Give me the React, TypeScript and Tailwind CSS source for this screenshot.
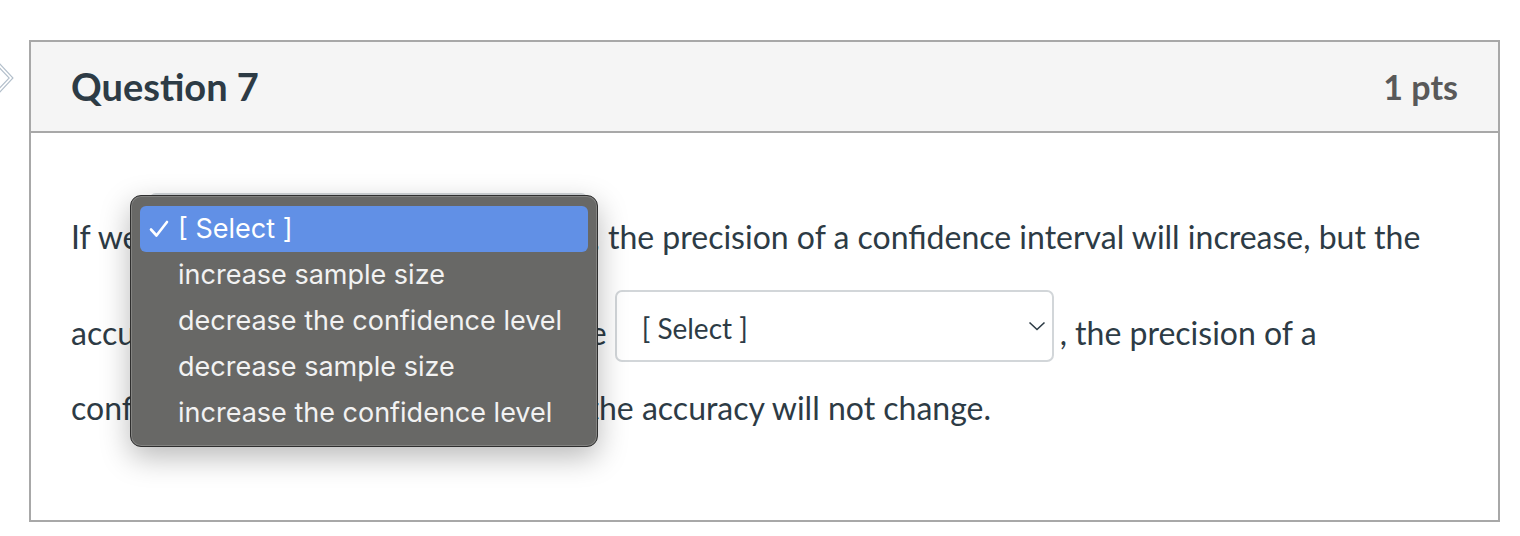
import React from 'react';

const options = [
  '[ Select ]',
  'increase sample size',
  'decrease the confidence level',
  'decrease sample size',
  'increase the confidence level',
];

const Chevron = () => (
  <svg width="18" height="10" viewBox="0 0 18 10" fill="none">
    <path d="M1.5 1.5 L9 8.5 L16.5 1.5" stroke="#2d3b45" strokeWidth="1.6" />
  </svg>
);

const Check = () => (
  <svg width="20" height="18" viewBox="0 0 20 18" fill="none">
    <path d="M2 9.5 L7.5 15.5 L18 2" stroke="#ffffff" strokeWidth="2.6" strokeLinecap="round" strokeLinejoin="round" />
  </svg>
);

const SelectBox: React.FC<{ className?: string }> = ({ className = '' }) => (
  <div
    className={`flex items-center justify-between w-[439px] h-[72px] border-2 border-[#d2d6d9] rounded-[7px] bg-white pl-[25px] pr-[6px] pt-[4px] shrink-0 ${className}`}
  >
    <span className="text-[28px] text-[#2d3b45]">[ Select ]</span>
    <span className="-mt-[4px]">
      <Chevron />
    </span>
  </div>
);

const NativeMenu = () => (
  <div className="absolute left-[99px] top-[153px] w-[468px] rounded-[11px] border border-[#2f2f2f] bg-[#686866] shadow-[0_10px_30px_rgba(0,0,0,0.28),inset_0_0_0_1px_rgba(255,255,255,0.18)] px-[9px] py-[10px] font-['Inter',sans-serif]">
    {options.map((o, i) => (
      <div
        key={o}
        className={`flex items-center h-[46px] rounded-[6px] text-[27px] ${
          i === 0 ? 'bg-[#6190e6] text-white' : 'text-[#f2f2f2]'
        }`}
      >
        <span className="w-[38px] pl-[9px] flex items-center">{i === 0 ? <Check /> : null}</span>
        <span>{o}</span>
      </div>
    ))}
  </div>
);

export default function App() {
  return (
    <div className="w-[1520px] h-[536px] bg-white font-['Lato',sans-serif] text-[#2d3b45] pt-[40px] flex overflow-hidden">
      <svg width="29" height="40" viewBox="0 0 29 40" className="mt-[22px] shrink-0">
        <path d="M-3 1 L11 16 L-3 31" stroke="#b3bfcb" strokeWidth="4" fill="none" strokeLinejoin="miter" />
        <path d="M-3 1 L11 16 L-3 31" stroke="#ffffff" strokeWidth="1.6" fill="none" strokeLinejoin="miter" />
      </svg>
      <div className="relative w-[1471px] h-[482px] border-2 border-[#a8a8a8] flex flex-col">
        <div className="h-[91px] bg-[#f5f5f5] border-b-2 border-[#a8a8a8] flex items-center justify-between px-[40px]">
          <h2 className="text-[38px] font-bold text-[#2d3b45]">Question 7</h2>
          <span className="text-[34px] font-bold text-[#595959]">1 pts</span>
        </div>
        <div className="flex flex-col gap-[25px] pl-[40px] pt-[60px] text-[32px]">
          <div className="flex items-start whitespace-pre">
            <span className="leading-[38px] mt-[25px]">If we</span>
            <SelectBox className="ml-[10px] mr-[4px]" />
            <span className="leading-[38px] mt-[25px]">, the precision of a confidence interval will increase, but the</span>
          </div>
          <div className="flex items-start whitespace-pre">
            <span className="leading-[38px] mt-[24px]">accuracy will not change. Instead if we</span>
            <SelectBox className="ml-[8px] mr-[6px]" />
            <span className="leading-[38px] mt-[24px]">, the precision of a</span>
          </div>
          <div className="whitespace-pre leading-[42px]">
            confidence interval will weaken,  but the accuracy will not change.
          </div>
        </div>
        <NativeMenu />
      </div>
    </div>
  );
}
